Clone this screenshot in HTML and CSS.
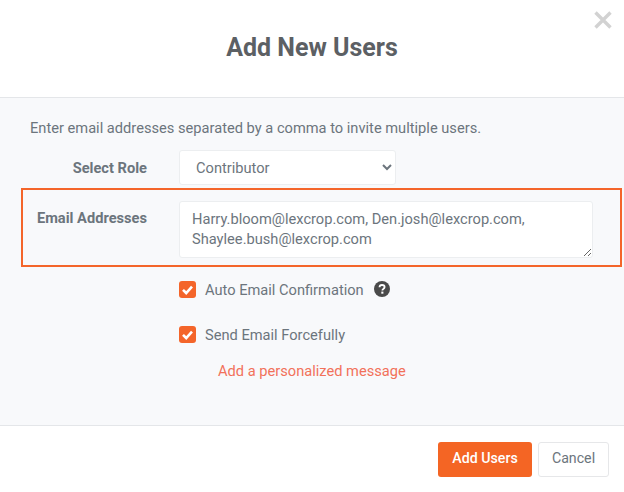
FILE: index.html
```html
<!DOCTYPE html>
<html lang="en">
<head>
<meta charset="utf-8">
<title>Add New Users</title>
<link rel="stylesheet" href="styles.css">
</head>
<body>
<div class="modal">
  <header class="modal-header">
    <h1 class="modal-title">Add New Users</h1>
    <button class="close" type="button" aria-label="Close">
      <svg viewBox="0 0 18 18" width="18" height="18"><path d="M1.500 1.500 16.500 16.500M16.500 1.500 1.500 16.500" stroke="#d2d2d2" stroke-width="3.4" fill="none"/></svg>
    </button>
  </header>
  <main class="modal-body">
    <p class="intro">Enter email addresses separated by a comma to invite multiple users.</p>
    <div class="row role-row">
      <label class="row-label" for="role">Select Role</label>
      <select class="field select" id="role"><option>Contributor</option></select>
    </div>
    <div class="row email-row">
      <label class="row-label" for="emails">Email Addresses</label>
      <textarea class="field textarea" id="emails">Harry.bloom@lexcrop.com, Den.josh@lexcrop.com, Shaylee.bush@lexcrop.com</textarea>
    </div>
    <div class="options">
      <div class="check-row first">
        <span class="check"><svg viewBox="0 0 17 17" width="17" height="17"><path d="M4 8.8 7.2 12 13 5.6" stroke="#fff" stroke-width="2.6" fill="none"/></svg></span>
        <span class="check-label">Auto Email Confirmation</span>
        <svg class="help" viewBox="0 0 16 16" width="16" height="16"><circle cx="8" cy="8" r="8" fill="#4a4a4a"/><path d="M5.5 6.2C5.6 4.7 6.6 4 8 4c1.500 0 2.600.8 2.600 2.100 0 1-.6 1.500-1.300 2-.6.400-.9.700-.9 1.400" stroke="#fff" stroke-width="1.800" fill="none"/><rect x="7.300" y="10.600" width="2.100" height="2.100" fill="#fff"/></svg>
      </div>
      <div class="check-row">
        <span class="check"><svg viewBox="0 0 17 17" width="17" height="17"><path d="M4 8.8 7.2 12 13 5.6" stroke="#fff" stroke-width="2.6" fill="none"/></svg></span>
        <span class="check-label">Send Email Forcefully</span>
      </div>
      <a class="message-link" href="#">Add a personalized message</a>
    </div>
  </main>
  <footer class="modal-footer">
    <button class="btn primary" type="button">Add Users</button>
    <button class="btn secondary" type="button">Cancel</button>
  </footer>
</div>
</body>
</html>
```
FILE: styles.css
```css
* { box-sizing: border-box; }
html, body { margin: 0; padding: 0; }
body {
  width: 624px;
  height: 492px;
  overflow: hidden;
  background: #fff;
  font-family: Roboto, "Liberation Sans", sans-serif;
  font-size: 14.65px;
  color: #6c757d;
}
.modal { display: flex; flex-direction: column; height: 492px; }
.modal-header {
  position: relative;
  height: 98px;
  padding-top: 32px;
  border-bottom: 1px solid #e4e6e9;
  text-align: center;
}
.modal-title {
  margin: 0;
  font-size: 25px;
  line-height: 32px;
  font-weight: 700;
  color: #5c6064;
}
.close {
  position: absolute;
  top: 11px;
  right: 12px;
  width: 18px;
  height: 18px;
  padding: 0;
  border: 0;
  background: none;
}
.close svg { display: block; }
.modal-body {
  height: 327px;
  padding-top: 21px;
  background: #f8f9fb;
}
.intro {
  margin: 0 0 13px 30px;
  line-height: 18px;
}
.row { display: flex; align-items: flex-start; }
.row-label {
  width: 126px;
  margin-right: 32px;
  text-align: right;
  font-weight: 700;
  line-height: 18px;
  color: #6c757d;
}
.role-row { padding-left: 21px; height: 35px; }
.role-row .row-label { padding-top: 9px; }
.field {
  background: #fff;
  border: 1px solid #eceef0;
  border-radius: 3px;
  font-family: inherit;
  font-size: 14.65px;
  color: #6c757d;
}
.select { width: 217px; height: 35px; padding: 0 13px 0 12px; }
.email-row {
  margin: 3px 2px 0 21px;
  height: 79px;
  border: 2px solid #f4652a;
  padding-top: 11px;
}
.email-row .row-label { width: 124px; margin-right: 32px; padding-top: 8px; }
.textarea {
  width: 414px;
  height: 57px;
  padding: 7px 12px;
  line-height: 20px;
  resize: both;
}
.options { padding: 14px 0 0 179px; }
.check-row { display: flex; align-items: center; height: 17px; margin-bottom: 28px; }
.check {
  width: 17px;
  height: 17px;
  margin-right: 9px;
  background: #f4652a;
  border-radius: 3px;
}
.check svg { display: block; }
.check-label { line-height: 17px; padding-top: 2px; }
.help { margin-left: 10px; margin-top: -2px; }
.message-link {
  display: block;
  margin: -9px 0 0 39px;
  line-height: 18px;
  color: #f2715a;
  text-decoration: none;
}
.modal-footer {
  flex: 1;
  display: flex;
  justify-content: flex-end;
  gap: 6px;
  padding: 16px 15px 0 0;
  border-top: 1px solid #e4e6e9;
}
.btn {
  height: 35px;
  border-radius: 3px;
  font-family: inherit;
  font-size: 14.2px;
  padding: 0 0 3px;
}
.primary { width: 94px; background: #f46524; border: 0; color: #fff; font-weight: 500; }
.secondary { width: 71px; background: #fff; border: 1px solid #e6e7e9; color: #6c757d; }
```
